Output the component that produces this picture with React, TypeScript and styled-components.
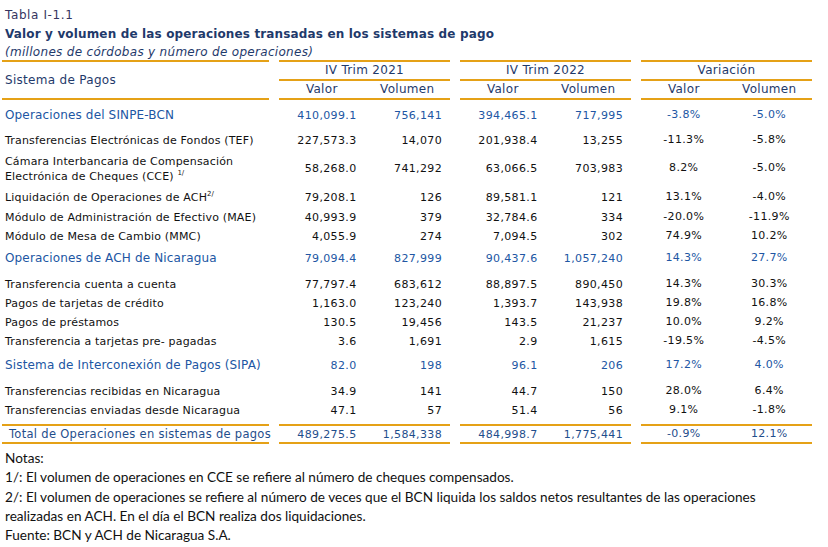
import React from "react";
import styled, { createGlobalStyle } from "styled-components";

const ORANGE = "#e5a117";
const NAVY = "#1f3a6b";
const BLUE = "#2156a3";

const Global = createGlobalStyle`
  html, body { margin: 0; padding: 0; background: #fff; }
  body { font-family: "DejaVu Sans", Verdana, sans-serif; }
`;

const Page = styled.div`
  width: 828px;
  height: 547px;
  padding: 6px 0 0 2px;
  box-sizing: border-box;
  overflow: hidden;
`;

const Caption = styled.div`
  padding-left: 3px;
  font-size: 12px;
  letter-spacing: 0.6px;
  line-height: 19px;
  color: #35355f;
`;

const Title = styled.div`
  padding-left: 3px;
  font-size: 12px;
  font-weight: bold;
  letter-spacing: 0.15px;
  line-height: 19px;
  color: ${NAVY};
`;

const Subtitle = styled.div`
  padding-left: 3px;
  font-size: 12px;
  font-style: italic;
  letter-spacing: 0.3px;
  line-height: 16px;
  color: ${NAVY};
`;

const HeaderRow = styled.div`
  display: flex;
  color: ${NAVY};
  font-size: 12px;
  letter-spacing: 0.3px;
`;

const HeaderLabel = styled.div`
  width: 267px;
  border-top: 2px solid ${ORANGE};
  border-bottom: 2px solid ${ORANGE};
  display: flex;
  align-items: center;
  padding: 0 0 1px 3px;
  box-sizing: border-box;
`;

const HeaderGroup = styled.div`
  width: 171px;
  margin-left: 10px;
  border-top: 2px solid ${ORANGE};
`;

const GroupTitle = styled.div`
  height: 17px;
  line-height: 17px;
  text-align: center;
  border-bottom: 2px solid ${ORANGE};
`;

const SubRow = styled.div`
  display: grid;
  grid-template-columns: 1fr 1fr;
  height: 17px;
  line-height: 17px;
  text-align: center;
  border-bottom: 2px solid ${ORANGE};
`;

const Body = styled.div`
  display: flex;
  flex-direction: column;
`;

const Row = styled.div<{ $h: number; $mt: number; $section?: boolean }>`
  display: flex;
  height: ${(p) => p.$h}px;
  margin-top: ${(p) => p.$mt}px;
  font-size: 11px;
  color: ${(p) => (p.$section ? BLUE : "#111")};
`;

const Label = styled.div<{ $section?: boolean }>`
  width: 267px;
  padding-left: 3px;
  box-sizing: border-box;
  display: flex;
  flex-direction: column;
  justify-content: center;
  font-size: ${(p) => (p.$section ? "12px" : "11px")};
  letter-spacing: ${(p) => (p.$section ? "0.15px" : "0.17px")};
  line-height: 15px;
  white-space: nowrap;
`;

const Group = styled.div`
  width: 171px;
  margin-left: 10px;
  display: grid;
  grid-template-columns: 1fr 1fr;
  align-items: center;
  letter-spacing: 0.35px;
`;

const Num = styled.div`
  text-align: right;
  padding-right: 8px;
`;

const Pct = styled.div`
  text-align: center;
  margin-top: -2px;
`;

const Sup = styled.sup`
  font-size: 7px;
  line-height: 0;
  vertical-align: 5px;
  letter-spacing: 0;
`;

const TotalRow = styled.div`
  display: flex;
  margin-top: 4px;
  height: 20px;
  font-size: 11px;
  color: #1f4e8c;
`;

const TotalLabel = styled.div`
  width: 267px;
  padding-left: 7px;
  box-sizing: border-box;
  border-top: 2px solid ${ORANGE};
  border-bottom: 2px solid ${ORANGE};
  display: flex;
  align-items: center;
  font-size: 11.5px;
  letter-spacing: 0.3px;
  white-space: nowrap;
`;

const TotalGroup = styled(Group)`
  border-top: 2px solid ${ORANGE};
  border-bottom: 2px solid ${ORANGE};
  box-sizing: border-box;
`;

const Notes = styled.div`
  margin-top: 5px;
  padding-left: 3px;
  font-family: Lato, "Liberation Sans", sans-serif;
  font-size: 13.6px;
  line-height: 19.3px;
  color: #111;
  white-space: nowrap;
`;

type RowData = {
  label: React.ReactNode;
  v: string[];
  section?: boolean;
  mt?: number;
  h?: number;
};

const rows: RowData[] = [
  { label: "Operaciones del SINPE-BCN", v: ["410,099.1", "756,141", "394,465.1", "717,995", "-3.8%", "-5.0%"], section: true, mt: 6 },
  { label: "Transferencias Electrónicas de Fondos (TEF)", v: ["227,573.3", "14,070", "201,938.4", "13,255", "-11.3%", "-5.8%"], mt: 6 },
  {
    label: (
      <>
        <span>Cámara Interbancaria de Compensación</span>
        <span>
          Electrónica de Cheques (CCE) <Sup>1/</Sup>
        </span>
      </>
    ),
    v: ["58,268.0", "741,292", "63,066.5", "703,983", "8.2%", "-5.0%"],
    h: 37,
  },
  {
    label: (
      <span>
        Liquidación de Operaciones de ACH<Sup>2/</Sup>
      </span>
    ),
    v: ["79,208.1", "126", "89,581.1", "121", "13.1%", "-4.0%"],
    h: 20,
  },
  { label: "Módulo de Administración de Efectivo (MAE)", v: ["40,993.9", "379", "32,784.6", "334", "-20.0%", "-11.9%"], h: 20 },
  { label: "Módulo de Mesa de Cambio (MMC)", v: ["4,055.9", "274", "7,094.5", "302", "74.9%", "10.2%"] },
  { label: "Operaciones de ACH de Nicaragua", v: ["79,094.4", "827,999", "90,437.6", "1,057,240", "14.3%", "27.7%"], section: true, mt: 3 },
  { label: "Transferencia cuenta a cuenta", v: ["77,797.4", "683,612", "88,897.5", "890,450", "14.3%", "30.3%"], mt: 7 },
  { label: "Pagos de tarjetas de crédito", v: ["1,163.0", "123,240", "1,393.7", "143,938", "19.8%", "16.8%"] },
  { label: "Pagos de préstamos", v: ["130.5", "19,456", "143.5", "21,237", "10.0%", "9.2%"] },
  { label: "Transferencia a tarjetas pre- pagadas", v: ["3.6", "1,691", "2.9", "1,615", "-19.5%", "-4.5%"] },
  { label: "Sistema de Interconexión de Pagos (SIPA)", v: ["82.0", "198", "96.1", "206", "17.2%", "4.0%"], section: true, mt: 5 },
  { label: "Transferencias recibidas en Nicaragua", v: ["34.9", "141", "44.7", "150", "28.0%", "6.4%"], mt: 7 },
  { label: "Transferencias enviadas desde Nicaragua", v: ["47.1", "57", "51.4", "56", "9.1%", "-1.8%"] },
];

const total = ["489,275.5", "1,584,338", "484,998.7", "1,775,441", "-0.9%", "12.1%"];

const Cells: React.FC<{ v: string[]; G: typeof Group }> = ({ v, G }) => (
  <>
    <G>
      <Num>{v[0]}</Num>
      <Num>{v[1]}</Num>
    </G>
    <G>
      <Num>{v[2]}</Num>
      <Num>{v[3]}</Num>
    </G>
    <G>
      <Pct>{v[4]}</Pct>
      <Pct>{v[5]}</Pct>
    </G>
  </>
);

export default function App() {
  return (
    <Page>
      <Global />
      <Caption>Tabla I-1.1</Caption>
      <Title>Valor y volumen de las operaciones transadas en los sistemas de pago</Title>
      <Subtitle>(millones de córdobas y número de operaciones)</Subtitle>
      <HeaderRow>
        <HeaderLabel>Sistema de Pagos</HeaderLabel>
        {["IV Trim 2021", "IV Trim 2022", "Variación"].map((t) => (
          <HeaderGroup key={t}>
            <GroupTitle>{t}</GroupTitle>
            <SubRow>
              <span>Valor</span>
              <span>Volumen</span>
            </SubRow>
          </HeaderGroup>
        ))}
      </HeaderRow>
      <Body>
        {rows.map((r, i) => (
          <Row key={i} $h={r.h ?? 19} $mt={r.mt ?? 0} $section={r.section}>
            <Label $section={r.section}>{r.label}</Label>
            <Cells v={r.v} G={Group} />
          </Row>
        ))}
        <TotalRow>
          <TotalLabel>Total de Operaciones en sistemas de pagos</TotalLabel>
          <Cells v={total} G={TotalGroup} />
        </TotalRow>
      </Body>
      <Notes>
        <div>Notas:</div>
        <div>1/: El volumen de operaciones en CCE se refiere al número de cheques compensados.</div>
        <div>
          2/: El volumen de operaciones se refiere al número de veces que el BCN liquida los saldos netos resultantes de las operaciones
        </div>
        <div>realizadas en ACH. En el día el BCN realiza dos liquidaciones.</div>
        <div>Fuente: BCN y ACH de Nicaragua S.A.</div>
      </Notes>
    </Page>
  );
}
